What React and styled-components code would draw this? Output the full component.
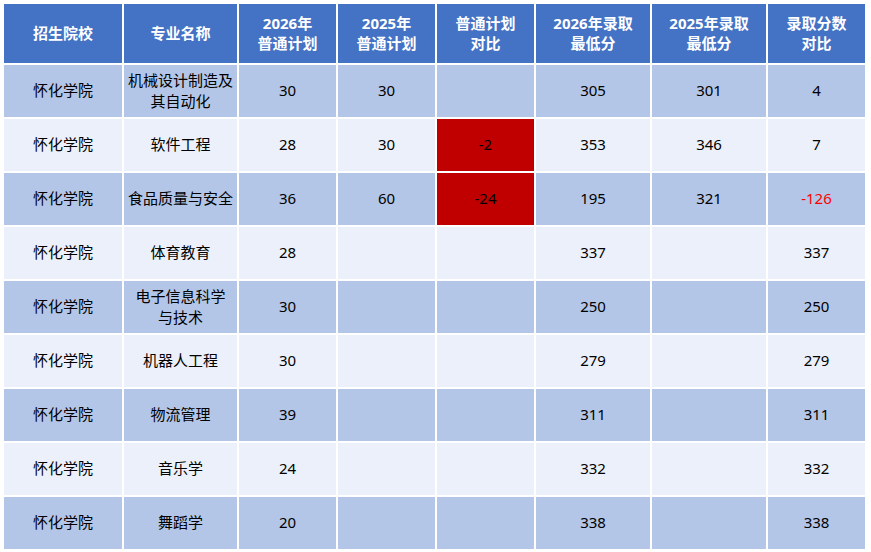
import React from 'react';
import styled, { createGlobalStyle } from 'styled-components';

const GlobalStyle = createGlobalStyle`
  html, body {
    margin: 0;
    padding: 0;
    background: #ffffff;
  }
  body {
    font-family: "Noto Sans", "Noto Sans CJK SC", sans-serif;
  }
`;

const Sheet = styled.div`
  display: grid;
  grid-template-columns: 118px 113px 97px 97px 97px 114px 114px 97px;
  grid-template-rows: 59px repeat(9, 52px);
  gap: 2px;
  padding: 4px;
  width: max-content;
  background: #ffffff;
`;

const HeadCell = styled.div`
  display: flex;
  align-items: center;
  justify-content: center;
  text-align: center;
  padding-bottom: 1px;
  background: #4472c4;
  color: #ffffff;
  font-weight: 700;
  font-size: 15px;
  line-height: 20px;
  white-space: pre-line;
`;

const Cell = styled.div`
  display: flex;
  align-items: center;
  justify-content: center;
  text-align: center;
  padding-bottom: 1px;
  background: ${(p) => (p.$alert ? '#c00000' : p.$dark ? '#b4c6e7' : '#ebf0fa')};
  color: ${(p) => (p.$negative ? '#ff0000' : '#000000')};
  font-size: 15px;
  line-height: 21px;
  white-space: pre-line;
`;

const headers = [
  '招生院校',
  '专业名称',
  '2026年\n普通计划',
  '2025年\n普通计划',
  '普通计划\n对比',
  '2026年录取\n最低分',
  '2025年录取\n最低分',
  '录取分数\n对比',
];

const rows = [
  ['怀化学院', '机械设计制造及\n其自动化', '30', '30', '', '305', '301', '4'],
  ['怀化学院', '软件工程', '28', '30', '-2', '353', '346', '7'],
  ['怀化学院', '食品质量与安全', '36', '60', '-24', '195', '321', '-126'],
  ['怀化学院', '体育教育', '28', '', '', '337', '', '337'],
  ['怀化学院', '电子信息科学\n与技术', '30', '', '', '250', '', '250'],
  ['怀化学院', '机器人工程', '30', '', '', '279', '', '279'],
  ['怀化学院', '物流管理', '39', '', '', '311', '', '311'],
  ['怀化学院', '音乐学', '24', '', '', '332', '', '332'],
  ['怀化学院', '舞蹈学', '20', '', '', '338', '', '338'],
];

const App = () => {
  return (
    <>
      <GlobalStyle />
      <Sheet>
        {headers.map((h) => (
          <HeadCell key={h}>{h}</HeadCell>
        ))}
        {rows.map((row, r) =>
          row.map((value, c) => {
            const isNeg = value.startsWith('-');
            return (
              <Cell
                key={`${r}-${c}`}
                $dark={r % 2 === 0}
                $alert={c === 4 && isNeg}
                $negative={c === 7 && isNeg}
              >
                {value}
              </Cell>
            );
          })
        )}
      </Sheet>
    </>
  );
};

export default App;
